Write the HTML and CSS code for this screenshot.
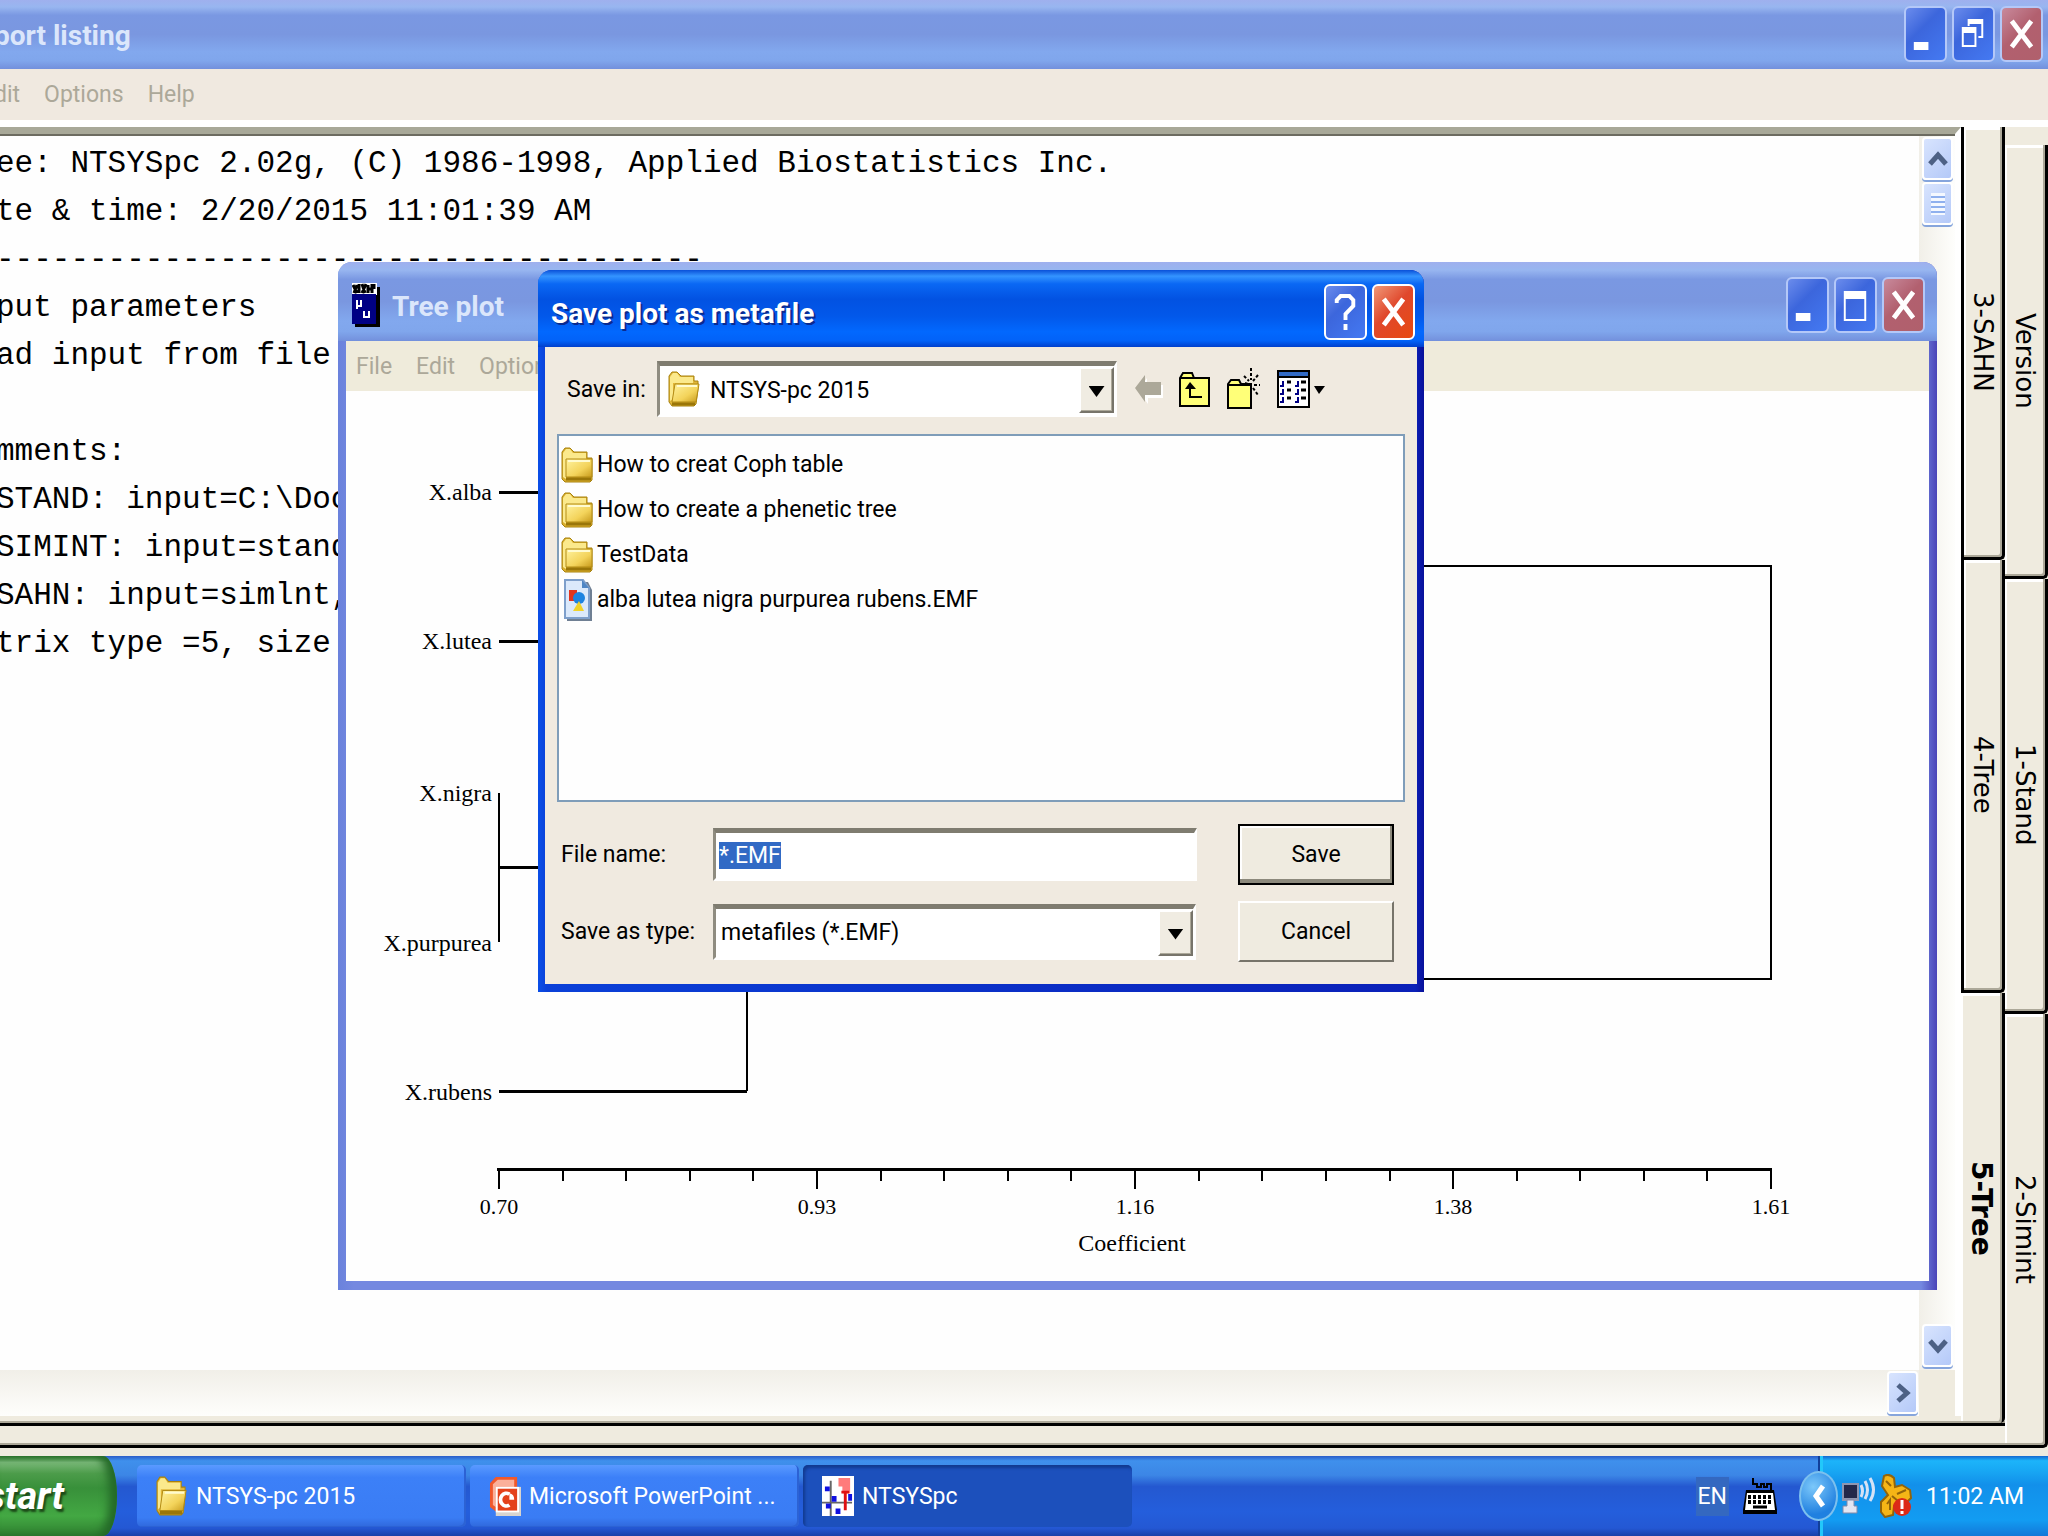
FILE: index.html
```html
<!DOCTYPE html>
<html lang="en">
<head>
  <meta charset="UTF-8" />
  <meta name="viewport" content="width=device-width, initial-scale=1.0">
  <title>NTSYSpc</title>
  <link rel="stylesheet" href="styles.css">
</head>
<body>
  <svg class="defs" aria-hidden="true">
    <linearGradient id="gold" x1="0" y1="0" x2="1" y2="1">
      <stop offset="0" stop-color="#fff3a0" />
      <stop offset="0.6" stop-color="#f3d35a" />
      <stop offset="1" stop-color="#c79a1c" />
    </linearGradient>
    <symbol id="folder" viewBox="0 0 33 36" preserveAspectRatio="none">
      <path d="M1 5L4 1H9L13 5H26V11H31V33L29 35H4L1 32Z" fill="#d9ae2c" stroke="#a8820f" stroke-width="1" />
      <path d="M2 6L5 2H9L12 6H25V12H5V32L2 30Z" fill="#fbe98c" />
      <path d="M5 12H31V30H5Z" fill="url(#gold)" stroke="#b38b15" stroke-width="1" />
      <path d="M7 14H29" stroke="#fffbd0" stroke-width="2" />
      <path d="M5 32H30" stroke="#9a7609" stroke-width="3" />
    </symbol>
    <symbol id="folder-open" viewBox="0 0 33 36" preserveAspectRatio="none">
      <path d="M1 5L4 1H9L13 5H26V10H30V18L28 33L26 35H4L1 31Z" fill="#e0b638" stroke="#a8820f" stroke-width="1" />
      <path d="M2 6L5 2H9L12 6H25V12H5V28L2 30Z" fill="#fbe98c" />
      <path d="M7 13H31L28 31H4Z" fill="url(#gold)" stroke="#b38b15" stroke-width="1" />
      <path d="M9 15H29" stroke="#fffbd0" stroke-width="2" />
      <path d="M4 33H27" stroke="#9a7609" stroke-width="3" />
    </symbol>
    <symbol id="minimize" viewBox="0 0 40 52" preserveAspectRatio="none">
      <path d="M8 34H23V42H8Z" fill="#fff" />
    </symbol>
    <symbol id="maximize" viewBox="0 0 40 52" preserveAspectRatio="none">
      <path d="M8 12H31V42H8ZM10 20V40H29V20Z" fill="#fff" fill-rule="evenodd" />
    </symbol>
    <symbol id="restore" viewBox="0 0 40 52" preserveAspectRatio="none">
      <path d="M14 11H30V30H25V28H28V16H16V18H14Z" fill="#fff" />
      <path d="M8 19H23V39H8ZM10 25V37H21V25Z" fill="#fff" fill-rule="evenodd" />
    </symbol>
    <symbol id="close" viewBox="0 0 40 52" preserveAspectRatio="none">
      <path d="M10 13L30 39M30 13L10 39" fill="none" stroke="#fff" stroke-width="5" />
    </symbol>
    <symbol id="chevron" viewBox="0 0 20 16">
      <path d="M2 13L10 4L18 13" fill="none" stroke="#4d6185" stroke-width="5" />
    </symbol>
  </svg>

  <main class="app">
    <header class="titlebar">
      <h1 class="title title-cut">port listing</h1>
      <div class="window-buttons">
        <button class="win-btn" aria-label="Minimize"><svg><use href="#minimize" /></svg></button>
        <button class="win-btn" aria-label="Restore"><svg><use href="#restore" /></svg></button>
        <button class="win-btn win-close" aria-label="Close"><svg><use href="#close" /></svg></button>
      </div>
    </header>
    <nav class="menubar menubar-main">
      <button class="menu-item">dit</button>
      <button class="menu-item">Options</button>
      <button class="menu-item">Help</button>
    </nav>

    <div class="workspace">
      <div class="back-page">
        <div class="front-page">
          <section class="report">
            <pre class="listing">ee: NTSYSpc 2.02g, (C) 1986-1998, Applied Biostatistics Inc.
te &amp; time: 2/20/2015 11:01:39 AM
--------------------------------------
put parameters
ad input from file

mments:
STAND: input=C:\Doc
SIMINT: input=stand
SAHN: input=simlnt,
trix type =5, size</pre>
            <div class="vscroll">
              <button class="scroll-btn" aria-label="Scroll up"><svg><use href="#chevron" /></svg></button>
              <div class="thumb"></div>
              <button class="scroll-btn scroll-down" aria-label="Scroll down"><svg><use href="#chevron" /></svg></button>
            </div>
            <div class="hscroll">
              <button class="scroll-btn scroll-right" aria-label="Scroll right"><svg><use href="#chevron" /></svg></button>
            </div>
          </section>
          <div class="tabs">
            <button class="tab">3-SAHN</button>
            <button class="tab">4-Tree</button>
            <button class="tab tab-active">5-Tree</button>
          </div>
        </div>
      </div>
      <div class="tabs tabs-back">
        <button class="tab">Version</button>
        <button class="tab">1-Stand</button>
        <button class="tab">2-Simint</button>
      </div>
    </div>
  </main>

  <section class="window tree-window">
    <header class="titlebar titlebar-window">
      <svg class="app-icon" viewBox="0 0 28 44">
        <path d="M3 4H28V44H3Z" fill="#000" />
        <path d="M0 0H25V12H0Z" fill="#fff" />
        <path d="M1 2L5 10M5 2L2 10M7 1V10M10 1L13 10M14 1L10 10M16 2V10M16 6H20M20 1V10M22 1V6" stroke="#000" stroke-width="3" />
        <path d="M0 11H24V41H0Z" fill="#000084" />
        <path d="M5 26V17M5 23H9M9 17V24M12 28V34H17M17 28V35" fill="none" stroke="#fff" stroke-width="2" />
      </svg>
      <h2 class="title">Tree plot</h2>
      <div class="window-buttons">
        <button class="win-btn" aria-label="Minimize"><svg><use href="#minimize" /></svg></button>
        <button class="win-btn" aria-label="Maximize"><svg><use href="#maximize" /></svg></button>
        <button class="win-btn win-close" aria-label="Close"><svg><use href="#close" /></svg></button>
      </div>
    </header>
    <nav class="menubar">
      <button class="menu-item">File</button>
      <button class="menu-item">Edit</button>
      <button class="menu-item">Options</button>
    </nav>
    <svg class="plot" viewBox="0 0 1583 890">
      <g class="plot-lines">
        <path d="M153 101H240M153 250H240M153 476H240M153 700H401" stroke-width="3" />
        <path d="M153 402V551M401 560V700M1425 175V588" stroke-width="2" />
        <path d="M1040 175H1426M1040 588H1426" stroke-width="2" />
        <path d="M151 778H1426" stroke-width="3" />
        <path d="M153 778V798M471 778V798M789 778V798M1107 778V798M1425 778V798" stroke-width="2" />
        <path d="M217 778V790M280 778V790M344 778V790M407 778V790M535 778V790M598 778V790M662 778V790M725 778V790M853 778V790M916 778V790M980 778V790M1044 778V790M1171 778V790M1234 778V790M1298 778V790M1361 778V790" stroke-width="2" />
      </g>
      <g class="plot-names">
        <text x="146" y="109">X.alba</text>
        <text x="146" y="258">X.lutea</text>
        <text x="146" y="410">X.nigra</text>
        <text x="146" y="560">X.purpurea</text>
        <text x="146" y="709">X.rubens</text>
      </g>
      <g class="plot-axis">
        <text x="153" y="823">0.70</text>
        <text x="471" y="823">0.93</text>
        <text x="789" y="823">1.16</text>
        <text x="1107" y="823">1.38</text>
        <text x="1425" y="823">1.61</text>
      </g>
      <text class="plot-caption" x="786" y="860">Coefficient</text>
    </svg>
  </section>

  <form class="window save-dialog" onsubmit="return false">
    <header class="titlebar titlebar-active">
      <h2 class="title">Save plot as metafile</h2>
      <div class="window-buttons">
        <button type="button" class="win-btn" aria-label="Help">
          <svg viewBox="0 0 40 52" preserveAspectRatio="none"><path d="M11 17V14L15 10H24L28 14V20L20 28V34M20 38V44" fill="none" stroke="#fff" stroke-width="4" /></svg>
        </button>
        <button type="button" class="win-btn win-close" aria-label="Close"><svg><use href="#close" /></svg></button>
      </div>
    </header>
    <div class="dialog-body">
      <div class="lookin">
        <label for="saveIn">Save in:</label>
        <div class="combo combo-folder">
          <select id="saveIn"><option>NTSYS-pc 2015</option></select>
          <svg class="folder-icon combo-icon"><use href="#folder-open" /></svg>
          <span class="combo-arrow"></span>
        </div>
        <div class="tools">
          <button type="button" class="tool" aria-label="Back">
            <svg width="28" height="30"><path d="M3 16L12 4V11H28V24H13V30Z" fill="#fff" /><path d="M0 14L10 1V8H26V21H10V28Z" fill="#aca899" /></svg>
          </button>
          <button type="button" class="tool" aria-label="Up one level">
            <svg width="32" height="36"><path d="M1 35V7L4 2H13L15 7H30V35Z" fill="#ffff78" stroke="#000" stroke-width="2" /><path d="M1 7H15" stroke="#000" stroke-width="2" /><path d="M11 16V26H23" fill="none" stroke="#000" stroke-width="2" /><path d="M6 18L11 11L17 18Z" /></svg>
          </button>
          <button type="button" class="tool" aria-label="New folder">
            <svg width="34" height="42"><path d="M1 40V16L4 12H12L14 16H24V40Z" fill="#ffff78" stroke="#000" stroke-width="2" /><path d="M1 17H24" stroke="#000" stroke-width="2" /><path d="M24 0V12M17 8L22 13M31 7L26 13M27 17H33M26 20L31 27M18 15L21 16M24 15V20" fill="none" stroke="#000" stroke-width="2" stroke-dasharray="3 2" /></svg>
          </button>
          <button type="button" class="tool" aria-label="View menu">
            <svg width="50" height="38"><path d="M1 1H32V37H1Z" fill="#fff" stroke="#000" stroke-width="2" /><path d="M2 2H31V6H2Z" fill="#316ac5" /><path d="M1 7H32" stroke="#000" stroke-width="2" /><path d="M6 11V16H3M6 19V24H3M6 27V32H3M21 11V16H18M21 19V24H18M21 27V32H18" fill="none" stroke="#000084" stroke-width="2" /><path d="M10 12H14M10 20H14M10 28H14M24 12H29M24 20H29M24 28H29" stroke="#000" stroke-width="3" /><path d="M37 16H48L42 24Z" /></svg>
          </button>
        </div>
      </div>

      <ul class="files">
        <li><svg class="folder-icon"><use href="#folder" /></svg>How to creat Coph table</li>
        <li><svg class="folder-icon"><use href="#folder" /></svg>How to create a phenetic tree</li>
        <li><svg class="folder-icon"><use href="#folder" /></svg>TestData</li>
        <li>
          <svg class="folder-icon file-icon" viewBox="0 0 33 42">
            <path d="M6 3H27L31 11V42H6Z" fill="#6f7f93" />
            <path d="M4 1H22L28 9V39H4Z" fill="#dbe9fb" stroke="#7e9fcb" stroke-width="2" />
            <path d="M21 1V9H28Z" fill="#4f86c4" />
            <path d="M8 11H16V22H8Z" fill="#e2341d" />
            <circle cx="18" cy="19" r="6" fill="#1d83e0" />
            <path d="M12 32L18 22L23 32Z" fill="#f0d22a" />
          </svg>alba lutea nigra purpurea rubens.EMF
        </li>
      </ul>

      <div class="fields">
        <label for="fileName">File name:</label>
        <input type="text" id="fileName" value="*.EMF">
        <button type="submit" class="push push-default">Save</button>
        <label for="fileType">Save as type:</label>
        <div class="combo">
          <select id="fileType"><option>metafiles (*.EMF)</option></select>
          <span class="combo-arrow"></span>
        </div>
        <button type="button" class="push">Cancel</button>
      </div>
    </div>
  </form>

  <footer class="taskbar">
    <button class="start">start</button>
    <div class="tasks">
      <button class="task"><svg class="task-icon"><use href="#folder-open" /></svg>NTSYS-pc 2015</button>
      <button class="task">
        <svg class="task-icon" viewBox="0 0 33 44" preserveAspectRatio="none">
          <path d="M1 8L7 1H29V12H8V40L1 34Z" fill="#f0592c" />
          <path d="M4 9L9 4H26V12H7V34L4 32Z" fill="#fbb09a" />
          <path d="M7 12H33V44H7Z" fill="#d8d4cf" />
          <path d="M7 12H31V40H7Z" fill="#fff" />
          <path d="M9 14H29V38H9Z" fill="#e4421b" />
          <path d="M21 20A6 7 0 1 0 21 32" fill="none" stroke="#fff" stroke-width="4" />
          <path d="M21 19V26H26A6 7 0 0 0 21 19Z" fill="#fff" />
        </svg>Microsoft PowerPoint ...
      </button>
      <button class="task task-active">
        <svg class="task-icon" viewBox="0 0 33 42" preserveAspectRatio="none">
          <path d="M0 0H33V42H0Z" fill="#fff" />
          <path d="M17 2H29V18H21V11H17Z" fill="#ff7b7b" />
          <path d="M9 5V42M0 28H31" stroke="#666" stroke-width="2" />
          <path d="M3 11H8V16H3ZM10 21H15V27H10ZM4 29H9V34H4ZM14 34H19V40H14ZM27 19H31V26H27Z" fill="#1010e0" />
          <path d="M20 17H28M24 17V36" stroke="#e01010" stroke-width="3" />
        </svg>NTSYSpc
      </button>
    </div>
    <div class="language">
      <span class="lang">EN</span>
      <svg width="34" height="36" viewBox="0 0 34 36">
        <path d="M10 0V6H14V9H18V6H21V9H24V6H28V13" fill="none" stroke="#000" stroke-width="2" />
        <path d="M3 12H31L34 32V36H0V32Z" fill="#000" />
        <path d="M4 15H30L32 32H2Z" fill="#fff" />
        <path d="M5 19H29M5 24H29" stroke="#000" stroke-width="4" stroke-dasharray="3 2" />
        <path d="M10 29H24" stroke="#000" stroke-width="3" />
      </svg>
    </div>
    <div class="tray">
      <button class="tray-toggle" aria-label="Show hidden icons">
        <svg width="14" height="24"><path d="M11 2L4 12L11 22" fill="none" stroke="#fff" stroke-width="5" /></svg>
      </button>
      <svg width="34" height="38" viewBox="0 0 34 38">
        <path d="M0 6H17V24H0Z" fill="#8f96b0" />
        <path d="M2 8H15V21H2Z" fill="#23284a" />
        <path d="M5 23H12V29H15V36H1V29H5Z" fill="#e3e6f2" stroke="#8289a8" stroke-width="1" />
        <path d="M19 8Q22 14 19 20M23 4Q28 13 23 22M28 1Q35 13 28 24" fill="none" stroke="#d6e2f5" stroke-width="3" />
      </svg>
      <svg width="32" height="44" viewBox="0 0 32 44">
        <path d="M4 2Q9-1 14 4L15 13L22 11L30 16L31 24L25 30L14 32L13 41L5 43L1 38V28L8 21L2 12Z" fill="#f5b516" stroke="#92640a" stroke-width="2" />
        <path d="M6 7L11 12M7 30L10 26V36M17 20L26 16M12 22L18 27" fill="none" stroke="#92640a" stroke-width="2" />
        <circle cx="22" cy="33" r="9" fill="#dc2a17" />
        <path d="M22 26V35M22 37V40" stroke="#fff" stroke-width="3" />
      </svg>
      <time class="clock">11:02 AM</time>
    </div>
  </footer>

  <script>
    const fileName = document.getElementById("fileName");
    fileName.focus();
    fileName.select();
  </script>
</body>
</html>
```

FILE: styles.css
```css
* {
  box-sizing: border-box;
}
body {
  margin: 0;
  height: 100vh;
  display: flex;
  flex-direction: column;
  overflow: hidden;
  background: #efebdf;
  color: #000;
  font-family: Roboto, "Liberation Sans", sans-serif;
  font-size: 23px;
}
button, input, select {
  font: inherit;
  color: inherit;
  margin: 0;
}
button {
  padding: 0;
  border: none;
  background: none;
}
.defs {
  position: absolute;
  width: 0;
  height: 0;
}

/* title bars */
.titlebar {
  display: flex;
  align-items: center;
  height: 69px;
  padding: 0 5px 2px 0;
  background: linear-gradient(#9fb0ee 0, #98b6f0 10%, #7a98e2 22%, #7a97e0 50%, #82a8ee 75%, #80a6ec 88%, #7390dc);
}
.title {
  flex: 1;
  margin: 0;
  padding-top: 4px;
  font-size: 28px;
  line-height: 40px;
  color: #dbe6fb;
  white-space: nowrap;
}
.title-cut {
  margin-left: -6px;
}
.window-buttons {
  display: flex;
  gap: 5px;
}
.win-btn {
  width: 43px;
  height: 56px;
  border: 2px solid #b4c8f8;
  border-radius: 6px;
  background: linear-gradient(135deg, #6b8cec, #3c66dc 40%, #4479f2);
}
.win-btn svg {
  display: block;
  width: 100%;
  height: 100%;
}
.win-close {
  background: linear-gradient(135deg, #c88a9c, #b2606f 45%, #b0606c);
}

.menubar {
  display: flex;
  align-items: center;
  gap: 24px;
  height: 50px;
  padding: 0 10px;
  background: #efebdb;
}
.menubar-main {
  height: 58px;
  padding: 0;
  border-bottom: 7px solid #fff;
  background: #f0e9e0;
}
.menu-item {
  color: #aca899;
}
.menubar-main .menu-item:first-child {
  margin-left: -6px;
}

/* report window */
.app {
  flex: 1;
  min-height: 0;
  display: flex;
  flex-direction: column;
}
.workspace {
  flex: 1;
  min-height: 0;
  display: flex;
  padding-bottom: 8px;
}
.back-page {
  flex: 1;
  display: flex;
  padding-bottom: 19px;
  border-bottom: 3px solid #000;
  box-shadow: inset 0 -2px #aca899;
}
.front-page {
  flex: 1;
  display: flex;
  border-bottom: 3px solid #000;
  box-shadow: inset 0 -2px #aca899;
}
.report {
  flex: 1;
  display: grid;
  grid-template-columns: 1fr 36px;
  grid-template-rows: 1fr 46px;
  margin-bottom: 7px;
  border-top: 7px solid #a8a898;
  border-right: 6px solid #fff;
  box-shadow: inset 0 2px #6c6b60;
  background: #efebdf;
}
.listing {
  margin: 2px 0 0 -4px;
  padding: 4px 0 0;
  background: #fefefe;
  font-family: "Liberation Mono", monospace;
  font-size: 31px;
  line-height: 48px;
  overflow: hidden;
}
.vscroll {
  display: flex;
  flex-direction: column;
  gap: 2px;
  margin-top: 2px;
  padding: 1px 2px 3px 3px;
  background: linear-gradient(90deg, #f1efe8, #fefefc);
}
.hscroll {
  display: flex;
  justify-content: flex-end;
  padding: 1px;
  background: linear-gradient(#f1efe8, #fefefc);
}
.scroll-btn, .thumb {
  flex: none;
  display: flex;
  align-items: center;
  justify-content: center;
  width: 31px;
  height: 43px;
  border: 2px solid #fff;
  border-radius: 4px;
  box-shadow: 0 2px #86a5dc;
  background: linear-gradient(135deg, #d8e4fe, #b4c9f8);
}
.scroll-btn svg {
  width: 20px;
  height: 16px;
}
.scroll-down {
  margin-top: auto;
}
.scroll-down svg {
  transform: rotate(180deg);
}
.scroll-right svg {
  transform: rotate(90deg);
}
.thumb::before {
  content: "";
  width: 14px;
  height: 22px;
  background: repeating-linear-gradient(#f4f8ff 0 3px, #8fb0ee 3px 5px);
}

/* notebook tabs down the right side */
.tabs {
  display: flex;
  flex-direction: column;
  width: 44px;
}
.tab {
  flex: 1;
  writing-mode: vertical-rl;
  font-family: "DejaVu Sans", sans-serif;
  font-size: 26px;
  text-align: center;
  background: #efebdf;
  border: solid #000;
  border-width: 0 3px 3px 3px;
  border-radius: 0 0 5px 0;
  box-shadow: inset -2px -2px #aca899, inset 2px 3px #fff;
}
.tab-active {
  border-left: none;
  border-bottom: none;
  font-size: 28px;
  font-weight: bold;
}
.tabs-back {
  width: 43px;
  margin-top: 18px;
}
.tabs-back .tab {
  border-left: none;
}

/* floating windows */
.window {
  position: absolute;
  border-radius: 14px 14px 0 0;
  overflow: hidden;
}
.tree-window {
  top: 262px;
  left: 338px;
  right: 111px;
  padding: 0 8px 9px 8px;
  background: linear-gradient(90deg, #6a82dc, #7488e0 1%, #7488e0 99%, #4a44b8);
}
.titlebar-window {
  height: 79px;
  margin: 0 -8px;
  padding: 6px 12px 0 14px;
  gap: 12px;
}
.plot {
  display: block;
  width: 100%;
  background: #fefefe;
  font-family: "Liberation Serif", serif;
  font-size: 24px;
}
.plot-lines {
  fill: none;
  stroke: #000;
  shape-rendering: crispEdges;
}
.plot-names {
  text-anchor: end;
}
.plot-axis, .plot-caption {
  text-anchor: middle;
}
.plot-axis {
  font-size: 22px;
}
.app-icon {
  width: 28px;
  height: 44px;
}

.save-dialog {
  top: 270px;
  left: 538px;
  width: 886px;
  padding: 0 7px 8px;
  background: linear-gradient(90deg, #0a4fe8, #0a40d8 1%, #0a20b8 99%, #08109a);
}
.titlebar-active {
  height: 77px;
  margin: 0 -7px;
  padding: 6px 9px 0 13px;
  background: linear-gradient(#0a50d8 0, #3494ff 8%, #0a68f4 18%, #0252e2 38%, #0258ea 60%, #0268fe 80%, #0262f8 92%, #0140cc);
}
.titlebar-active .title {
  color: #fff;
  text-shadow: 2px 2px #0a2a90;
}
.titlebar-active .win-btn {
  border-color: #fff;
}
.titlebar-active .win-close {
  background: linear-gradient(135deg, #f09878, #e0482c 45%, #e84a10);
}
.dialog-body {
  padding: 14px 12px 22px 12px;
  background: #f0eae0;
}
.lookin {
  display: flex;
  align-items: center;
  gap: 10px;
  padding-left: 10px;
  margin-bottom: 17px;
}
.lookin label {
  width: 80px;
}
.lookin label, .fields label {
  white-space: nowrap;
}
.combo {
  position: relative;
}
.combo-folder {
  width: 460px;
}
.combo select, .fields input {
  display: block;
  width: 100%;
  height: 56px;
  padding: 0 5px;
  appearance: none;
  outline: none;
  background: #fff;
  border: 3px solid;
  border-color: #7f7c70 #fff #fff #8f8c80;
  border-top-width: 5px;
  border-radius: 0;
}
.combo.combo-folder select {
  padding-left: 50px;
}
.combo-arrow {
  position: absolute;
  top: 6px;
  right: 3px;
  bottom: 4px;
  width: 35px;
  background: #f0ece2;
  border: 2px solid;
  border-color: #fff #77746a #77746a #fff;
  box-shadow: inset -1px -1px #aca899;
  pointer-events: none;
}
.combo-arrow::before {
  content: "";
  display: block;
  margin: 17px auto 0;
  width: 16px;
  height: 11px;
  background: #000;
  clip-path: polygon(0 0, 100% 0, 50% 100%);
}
.combo-icon {
  position: absolute;
  left: 11px;
  top: 10px;
}
.folder-icon {
  flex: none;
  width: 33px;
  height: 36px;
}
.file-icon {
  height: 42px;
}
.tools {
  display: flex;
  align-items: center;
  gap: 16px;
  padding-left: 8px;
}
.tool svg {
  display: block;
}
.files {
  height: 368px;
  margin: 0 0 22px;
  padding: 6px 2px;
  list-style: none;
  background: #fefefe;
  border: 2px solid #7f9db9;
}
.files li {
  display: flex;
  align-items: center;
  gap: 3px;
  height: 45px;
}
.fields {
  display: grid;
  grid-template-columns: 145px 484px 156px;
  column-gap: 6px;
  row-gap: 16px;
  align-items: center;
  padding-left: 4px;
}
.fields input, .fields .combo {
  margin-left: 1px;
}
.fields input {
  height: 53px;
  padding: 0 3px;
}
.fields input::selection {
  background: #316ac5;
  color: #fff;
}
.push {
  width: 156px;
  height: 61px;
  margin-left: 36px;
  background: #efebe0;
  border: 2px solid;
  border-color: #fff #77746a #77746a #fff;
}
.push-default {
  border: 2px solid #000;
  box-shadow: inset -2px -4px #8c897c, inset 2px 2px #fff;
}

/* taskbar */
.taskbar {
  display: flex;
  align-items: center;
  height: 80px;
  color: #fff;
  background: linear-gradient(#2a5cc8 0, #3f90ec 6%, #3c86e6 24%, #2458d0 38%, #245edc 70%, #2458d4 90%, #1a40a8);
}
.start {
  align-self: stretch;
  display: flex;
  align-items: center;
  justify-content: flex-end;
  width: 117px;
  padding-right: 53px;
  overflow: hidden;
  font-size: 38px;
  font-weight: bold;
  font-style: italic;
  text-shadow: 2px 3px 2px #1c4a18;
  border-radius: 0 14px 14px 0 / 0 40px 40px 0;
  background: linear-gradient(#2f7a30 0, #79b878 8%, #4c9c4a 22%, #38903a 40%, #43a843 75%, #2f8030);
  box-shadow: inset -8px 0 8px #246a28;
}
.tasks {
  flex: 1;
  display: flex;
  gap: 4px;
  padding-left: 20px;
}
.task {
  display: flex;
  align-items: center;
  gap: 8px;
  width: 329px;
  height: 62px;
  padding-left: 19px;
  white-space: nowrap;
  border-radius: 5px;
  background: linear-gradient(#5a9aff, #3c80f8 20%, #3a7cf4 85%, #2f68dc);
  box-shadow: inset -2px -1px #2c62d4;
}
.task-active {
  background: #1c50bc;
  box-shadow: inset 2px 3px 3px #123a90;
}
.task-icon {
  flex: none;
  width: 32px;
  height: 40px;
}
.language {
  display: flex;
  align-items: center;
  gap: 14px;
  padding-right: 41px;
}
.lang {
  padding: 6px 2px;
  background: #3468c0;
}
.tray {
  align-self: stretch;
  display: flex;
  align-items: center;
  gap: 4px;
  width: 230px;
  border-left: 2px solid #123f9a;
  background: linear-gradient(#1568d0 0, #1cb4fa 6%, #18a8f4 18%, #1290ea 36%, #129cf2 80%, #1278d8);
  box-shadow: inset 3px 0 #22c8fa;
}
.tray-toggle {
  flex: none;
  display: flex;
  align-items: center;
  justify-content: center;
  width: 39px;
  height: 50px;
  margin-left: -21px;
  border: 2px solid #7cc0ee;
  border-radius: 50%;
  background: radial-gradient(circle at 35% 30%, #7cc8fa, #2080e0 70%);
}
.clock {
  margin-left: 10px;
  white-space: nowrap;
}
```
